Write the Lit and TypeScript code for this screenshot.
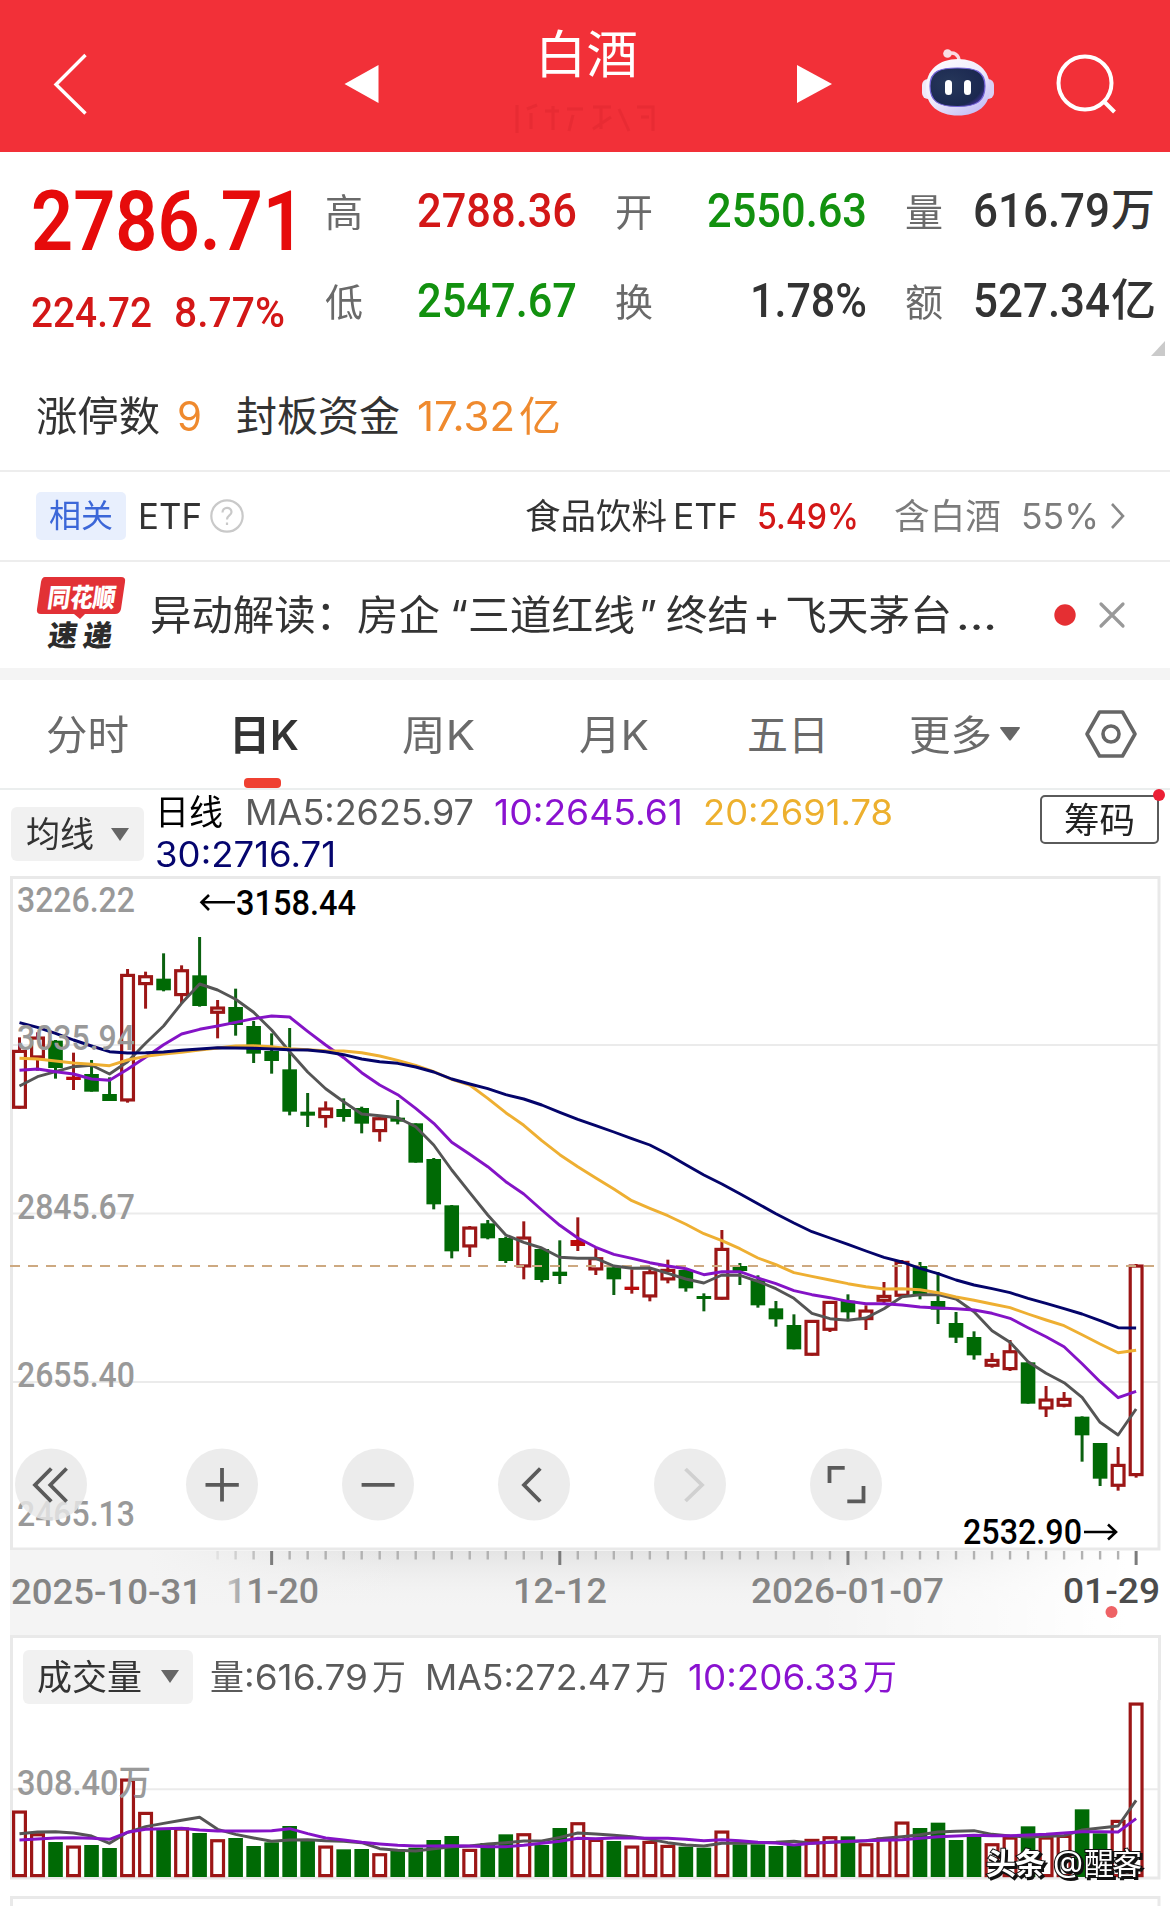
import { LitElement, html, svg, css } from "lit";
import { customElement, property } from "lit/decorators.js";

/** A run of text condensed or expanded horizontally to an exact width. */
@customElement("fit-text")
class FitText extends LitElement {
  @property({ type: Number }) w = 0;
  @property() text = "";
  static styles = css`
    :host { display: block; white-space: pre; flex: none; height: 1.2em; line-height: 1.2; }
    .run { display: inline-block; transform-origin: 0 50%; }
  `;
  render() {
    return html`<span class="run">${this.text}</span>`;
  }
  updated() {
    const run = this.renderRoot.querySelector(".run") as HTMLElement;
    this.style.width = `${this.w}px`;
    run.style.transform = "none";
    const natural = run.getBoundingClientRect().width;
    if (natural > 0) run.style.transform = `scaleX(${this.w / natural})`;
  }
}

const t = (text: string, w: number, cls = "") =>
  html`<fit-text class=${cls} .text=${text} .w=${w}></fit-text>`;

const FIRST = 19.5;
const STEP = 18.01;
const cx = (i: number) => FIRST + STEP * i;

type Candle = [string, number, number, number, number];
const scaleSet = (base: number, rows: Candle[]): Candle[] =>
  rows.map(([k, h, a, b, l]) => [k, base + h / 3, base + a / 3, base + b / 3, base + l / 3]);

const CANDLES: Candle[] = [
  ...scaleSet(870, [
    ["r", 502, 540, 716, 716], ["r", 487, 500, 565, 602], ["g", 510, 512, 594, 626], ["r", 548, 620, 630, 660],
    ["g", 570, 612, 665, 665], ["g", 622, 672, 693, 693], ["r", 297, 312, 694, 698], ["r", 305, 316, 345, 416],
    ["g", 250, 326, 361, 364], ["r", 286, 298, 378, 402], ["g", 201, 316, 408, 410], ["r", 390, 410, 431, 505],
    ["g", 356, 411, 465, 497], ["g", 453, 468, 551, 579], ["g", 490, 543, 573, 611], ["g", 474, 598, 725, 736],
    ["g", 669, 725, 737, 771], ["r", 694, 713, 744, 773], ["g", 685, 717, 741, 755], ["g", 710, 714, 761, 790],
    ["r", 742, 742, 786, 815],
  ]),
  ...scaleSet(1050, [
    ["g", 150, 203, 215, 223], ["g", 220, 220, 338, 338], ["g", 324, 327, 463, 478], ["g", 465, 466, 604, 625],
    ["r", 528, 530, 592, 621], ["g", 510, 520, 565, 568], ["g", 560, 564, 633, 639], ["r", 514, 560, 652, 688],
    ["g", 594, 597, 690, 697], ["g", 571, 665, 678, 702], ["r", 502, 570, 588, 603], ["r", 592, 622, 661, 675],
    ["g", 650, 652, 688, 735], ["r", 658, 710, 720, 731], ["r", 652, 664, 742, 754], ["r", 629, 657, 691, 700],
    ["g", 655, 660, 715, 725], ["g", 730, 738, 747, 784], ["r", 540, 594, 749, 749], ["g", 639, 648, 663, 705],
    ["g", 676, 690, 766, 773],
  ]),
  ...scaleSet(1200, [
    ["g", 303, 325, 358, 380], ["g", 343, 375, 448, 448], ["r", 360, 360, 467, 467], ["r", 303, 303, 392, 396],
    ["g", 283, 302, 337, 360], ["r", 316, 329, 360, 390], ["r", 246, 285, 305, 312], ["r", 180, 183, 290, 292],
    ["g", 186, 198, 284, 298], ["g", 216, 303, 329, 372], ["g", 336, 369, 413, 429], ["g", 394, 411, 466, 479],
    ["r", 459, 477, 500, 503], ["r", 420, 451, 510, 513], ["g", 486, 487, 611, 611], ["r", 558, 596, 628, 651],
    ["r", 576, 594, 620, 622], ["g", 649, 650, 706, 785], ["g", 729, 729, 836, 858], ["r", 741, 792, 860, 872],
    ["r", 192, 194, 828, 833],
  ]),
];

const series = (a: number[], b: number[], c: number[]) => [
  ...a.map((v) => 870 + v / 3), ...b.map((v) => 1050 + v / 3), ...c.map((v) => 1200 + v / 3),
];
const MA5 = series(
  [648, 620, 605, 590, 586, 612, 575, 520, 468, 400, 342, 360, 388, 427, 480, 545, 606, 656, 695, 732, 737],
  [203, 230, 285, 360, 428, 495, 555, 577, 594, 622, 625, 625, 648, 655, 654, 670, 687, 699, 675, 676, 694],
  [266, 295, 340, 356, 361, 354, 326, 290, 284, 284, 297, 335, 392, 427, 485, 520, 548, 592, 667, 705, 627]);
const MA10 = series(
  [601, 597, 605, 612, 627, 631, 598, 562, 524, 492, 478, 468, 457, 446, 438, 441, 484, 525, 563, 608, 645],
  [134, 175, 220, 277, 313, 350, 395, 432, 480, 526, 564, 592, 613, 625, 638, 648, 656, 674, 665, 665, 684],
  [251, 272, 284, 293, 304, 311, 311, 315, 321, 324, 326, 330, 340, 355, 383, 410, 440, 491, 545, 593, 574]);
const MA20 = series(
  [565, 567, 573, 579, 583, 587, 570, 559, 552, 547, 540, 534, 528, 527, 530, 536, 539, 542, 543, 548, 558],
  [31, 46, 65, 88, 105, 145, 188, 226, 272, 314, 350, 384, 417, 452, 475, 497, 523, 551, 572, 596, 624],
  [194, 218, 229, 240, 251, 260, 267, 266, 269, 278, 291, 301, 312, 323, 342, 360, 377, 404, 432, 458, 451]);
const MA30 = series(
  [458, 472, 490, 510, 528, 545, 549, 548, 546, 541, 537, 533, 534, 535, 537, 539, 540, 545, 554, 567, 575],
  [40, 51, 66, 87, 102, 116, 134, 147, 165, 187, 208, 227, 246, 266, 285, 313, 344, 375, 402, 431, 461],
  [41, 69, 95, 114, 133, 153, 172, 186, 205, 221, 240, 255, 266, 278, 295, 310, 326, 342, 362, 383, 384]);

const VOLUMES = [
  542, 610, 636, 647, 645, 654, 446, 546, 600, 593, 609, 628, 624, 648, 637, 588, 629, 647, 658, 657, 670, 660,
  653, 630, 618, 657, 639, 613, 610, 645, 594, 577, 627, 633, 647, 633, 645, 650, 653, 602, 643, 643, 648, 645,
  627, 619, 619, 640, 623, 575, 594, 578, 630, 620, 640, 620, 589, 620, 615, 538, 610, 570, 218,
];
const VOLUME_KIND = "rrgrggrrgrgrgggggrggrggggrggrggrrgrrrggrggggrrgrrrggggrrgrrggrr";
const VMA5 = [
  611, 606, 605, 609, 618, 640, 607, 590, 580, 571, 562, 598, 613, 624, 634, 630, 629, 632, 634, 638, 656, 661,
  663, 656, 650, 648, 642, 638, 633, 633, 622, 609, 612, 616, 620, 628, 638, 645, 648, 640, 640, 638, 637, 634,
  640, 637, 635, 632, 625, 620, 614, 606, 604, 602, 613, 618, 621, 619, 617, 600, 594, 588, 511,
];
const VMA10 = [
  630, 627, 624, 623, 625, 628, 607, 598, 596, 595, 600, 603, 603, 603, 602, 596, 611, 624, 630, 637, 642, 646,
  648, 648, 647, 648, 650, 650, 646, 640, 634, 625, 626, 624, 624, 625, 625, 628, 632, 629, 632, 637, 639, 645,
  640, 637, 634, 632, 631, 629, 625, 620, 618, 616, 617, 617, 615, 613, 609, 605, 605, 606, 566,
];

const line = (vals: number[], cls: string) =>
  svg`<polyline class="ma ${cls}" points=${vals.map((v, i) => `${cx(i)},${v.toFixed(1)}`).join(" ")}></polyline>`;

const label = (x: number, y: number, w: number, text: string, cls = "") =>
  svg`<text class="lab ${cls}" x=${x} y=${y} textLength=${w} lengthAdjust="spacingAndGlyphs">${text}</text>`;

const bar = (kind: string, x: number, top: number, bottom: number) => {
  const h = bottom - top;
  if (kind === "g") return svg`<rect class="down" x=${x - 7.3} y=${top} width="14.6" height=${h}></rect>`;
  if (h < 6.5) return svg`<rect class="up-solid" x=${x - 7.3} y=${top} width="14.6" height=${h}></rect>`;
  return svg`<rect class="up" x=${x - 5.9} y=${top + 1.4} width="11.8" height=${h - 2.8}></rect>`;
};

@customElement("price-chart")
class PriceChart extends LitElement {
  static styles = css`
    :host { display: block; height: 675px; }
    svg { display: block; overflow: visible; }
    .frame { fill: none; stroke: #e9e9e9; stroke-width: 3; }
    .grid { stroke: #ebebeb; stroke-width: 2; }
    .now { stroke: #cda981; stroke-width: 2; stroke-dasharray: 10 8; }
    .ma { fill: none; stroke-width: 2.9; stroke-linejoin: round; }
    .m5 { stroke: #555; } .m10 { stroke: #8413c6; } .m20 { stroke: #eeaf32; } .m30 { stroke: #04046a; }
    .down { fill: #006a05; } .wd { stroke: #0b6110; stroke-width: 3; }
    .up { fill: #fff; stroke: #9c1616; stroke-width: 3.2; } .up-solid { fill: #bc0a0a; }
    .wu { stroke: #9c1616; stroke-width: 3; }
    .lab { font: 500 35px Roboto, "Noto Sans CJK SC", sans-serif; fill: #999; }
    .ink { fill: #000; }
    .arrow { fill: none; stroke: #000; stroke-width: 2.6; }
    .disc { fill: #e8e8e8; fill-opacity: 0.82; }
    .ico { fill: none; stroke: #5a5a5a; stroke-width: 3.8; }
    .off { stroke: #d0d0d0; }
  `;
  render() {
    return html`<svg width="1170" height="675" viewBox="0 876 1170 675">
      <path class="grid" d="M12 1045H1158M12 1213.6H1158M12 1382H1158"></path>
      <rect class="frame" x="11.5" y="877.5" width="1147.5" height="671.5"></rect>
      ${CANDLES.map(([k, h, a, b, l], i) => svg`
        <line class=${k === "g" ? "wd" : "wu"} x1=${cx(i)} x2=${cx(i)} y1=${h} y2=${l}></line>
        ${bar(k, cx(i), a, b)}`)}
      <path class="now" d="M10 1266H1158"></path>
      ${line(MA5, "m5")}${line(MA10, "m10")}${line(MA20, "m20")}${line(MA30, "m30")}
      ${label(17, 912, 118, "3226.22")}${label(17, 1050, 118, "3035.94")}${label(17, 1218.5, 118, "2845.67")}
      ${label(17, 1387, 118, "2655.40")}${label(17, 1526, 118, "2465.13")}
      ${label(236, 915, 120, "3158.44", "ink")}${label(963, 1544, 119, "2532.90", "ink")}
      <path class="arrow" d="M235 902.3H202M209 895L201.500 902.3L209 910M1084 1532H1116M1108 1524.500L1116 1532L1108 1539.500"></path>
      ${[51, 222, 378, 534, 690, 846].map((x) => svg`<circle class="disc" cx=${x} cy="1484.5" r="36"></circle>`)}
      <path class="ico" d="M51.300 1468.500L35 1485L51.300 1501.500M66.600 1468.500L50.300 1485L66.600 1501.500M205.500 1484.800H238.800M222 1468V1501.500M361.600 1484.800H394.600M540.300 1468.500L524 1485L540.300 1501.500M829.500 1483V1467.800H844.700M847.300 1501.300H863.500V1486"></path>
      <path class="ico off" d="M685.500 1469L702 1485L685.500 1501"></path>
    </svg>`;
  }
}

@customElement("date-axis")
class DateAxis extends LitElement {
  static styles = css`
    :host { display: block; height: 84px; }
    svg { display: block; }
    .tick { stroke: #b2b2b2; stroke-width: 2.4; } .major { stroke: #7c7c7c; stroke-width: 3; }
    .lab { font: 500 35px Roboto, sans-serif; fill: #858585; }
    .today { fill: #4c4c4c; } .soft { fill: url(#txt); }
    .dot { fill: #ee6265; }
  `;
  render() {
    const ticks = Array.from({ length: 52 }, (_, k) => k + 11);
    return html`<svg width="1170" height="84" viewBox="0 1551 1170 84">
      <defs>
        <linearGradient id="v" x1="0" x2="0" y1="0" y2="1"><stop offset="0" stop-color="#e4e4e4"></stop><stop offset=".7" stop-color="#f4f4f4" stop-opacity="0"></stop></linearGradient>
        <linearGradient id="h"><stop offset=".12" stop-color="#f4f4f4"></stop><stop offset=".34" stop-color="#f4f4f4" stop-opacity="0"></stop><stop offset=".7" stop-color="#fff" stop-opacity="0"></stop><stop offset=".97" stop-color="#fff"></stop></linearGradient>
        <linearGradient id="txt"><stop offset="0" stop-color="#ccc"></stop><stop offset=".3" stop-color="#858585"></stop></linearGradient>
      </defs>
      <rect x="10" y="1551" width="1150" height="84" fill="#f4f4f4"></rect>
      <rect x="10" y="1551" width="1150" height="84" fill="url(#v)"></rect>
      <rect x="10" y="1551" width="1150" height="84" fill="url(#h)"></rect>
      ${ticks.map((i) => {
        const major = i === 14 || i === 30 || i === 46 || i === 62;
        return svg`<line class="tick ${major ? "major" : ""}" opacity=${i < 14 ? 0.25 * (i - 10) : 1} x1=${cx(i)} x2=${cx(i)} y1="1551" y2=${major ? 1565 : 1559.5}></line>`;
      })}
      ${label(11, 1603.5, 191, "2025-10-31")}${label(226, 1603, 93, "11-20", "soft")}${label(513, 1603, 94, "12-12")}
      ${label(751, 1603, 193, "2026-01-07")}${label(1063, 1603, 97, "01-29", "today")}
      <circle class="dot" cx="1111.5" cy="1612" r="6"></circle>
    </svg>`;
  }
}

@customElement("volume-chart")
class VolumeChart extends LitElement {
  static styles = css`
    :host { display: block; height: 206px; }
    svg { display: block; overflow: visible; }
    .grid { stroke: #ebebeb; stroke-width: 2; } .frame { fill: none; stroke: #e9e9e9; stroke-width: 3; }
    .ma { fill: none; stroke-width: 2.9; stroke-linejoin: round; }
    .m5 { stroke: #555; } .m10 { stroke: #8413c6; }
    .down { fill: #006a05; } .up { fill: #fff; stroke: #9c1616; stroke-width: 3.2; }
    .lab { font: 500 35px Roboto, "Noto Sans CJK SC", sans-serif; fill: #999; }
    .mark { font: 30px Inter, "Noto Sans CJK SC", sans-serif; fill: #fff; stroke: #111; stroke-width: 2px; paint-order: stroke; filter: drop-shadow(2px 2px 0 #111); }
    .heavy { font-weight: 700; }
  `;
  render() {
    return html`<svg width="1170" height="206" viewBox="0 1700 1170 206">
      <path class="grid" d="M12 1789.300H1158"></path>
      <path class="frame" d="M11.500 1700V1878H1159V1700M11.500 1906V1897.500H1159V1906"></path>
      ${VOLUMES.map((v, i) => bar(VOLUME_KIND[i], cx(i), 1630 + v / 3, 1877))}
      ${line(VMA5.map((v) => 1630 + v / 3), "m5")}${line(VMA10.map((v) => 1630 + v / 3), "m10")}
      ${label(17, 1795, 134, "308.40万")}
      <text class="mark heavy" x="986" y="1874" textLength="59">头条</text>
      <text class="mark" x="1053" y="1872" textLength="30" lengthAdjust="spacingAndGlyphs">@</text>
      <text class="mark" x="1084" y="1874" textLength="58">醒客</text>
    </svg>`;
  }
}

@customElement("app-root")
class AppRoot extends LitElement {
  static styles = css`
    :host { display: block; width: 1170px; height: 1906px; overflow: hidden; background: #fff; color: #333;
      font-family: Inter, "Noto Sans CJK SC", sans-serif; }
    * { box-sizing: border-box; }
    svg { display: block; flex: none; overflow: visible; }
    .row { display: flex; align-items: center; }
    .header { height: 152px; background: #f23038; display: grid; grid-template-columns: 344px 488px 338px; align-items: center; color: #fff; }
    .back { margin: 16px 0 0 53px; }
    .nav { display: grid; grid-template-columns: 34px 1fr 36px; }
    .nav .arrow { margin-top: 65px; }
    .title { display: flex; flex-direction: column; align-items: center; height: 152px; padding: 24px 0 0; margin-left: -1px; font-size: 51px; }
    .ghost { margin: 18px 0 0 -4px; }
    .tools { margin: 14px 0 0 87px; display: flex; gap: 60px; align-items: center; }
    .quote { position: relative; height: 208px; display: flex; padding-top: 14px; }
    .din { font-family: Roboto, "Noto Sans CJK SC", sans-serif; font-weight: 500; }
    .price { width: 326px; padding-left: 31px; color: #e60b0b; }
    .big { font-size: 83px; font-weight: 600; margin-top: 6px; }
    .delta { display: flex; gap: 22px; font-size: 42.500px; margin-top: 15px; color: #d31717; }
    .stats { display: grid; grid-template-columns: 91px 160px 39px 91px 160px 39px 67px 184px; grid-template-rows: 90px 90px; align-items: center; font-size: 48px; }
    .key { font-size: 38px; color: #6a6a6a; padding-top: 3px; font-weight: 400; margin-left: -1px; }
    .red { color: #d31717; } .green { color: #12910f; }
    .end { justify-self: end; }
    .corner { position: absolute; right: 5px; bottom: 4px; }
    .mix { display: flex; align-items: center; gap: 1px; }
    .wan { font-size: 44px; }
    .limit { height: 112px; border-bottom: 2px solid #ededed; padding: 4px 0 0 36px; font-size: 41px; }
    .orange { color: #ef8a2e; }
    .etf { height: 90px; border-bottom: 2px solid #ededed; padding-left: 36px; font-size: 35px; }
    .tag { width: 90px; height: 48px; border-radius: 5px; background: #e8effd; color: #3c67d8; font-size: 32px; display: flex; align-items: center; justify-content: center; }
    .soft { color: #7c7c7c; } .med { font-weight: 500; }
    .news { height: 106px; padding: 2px 0 0 35px; font-size: 41px; }
    .logo { font-family: Roboto, "Noto Sans CJK SC", sans-serif; font-weight: 900; }
    .badge { margin-top: -7px; }
    .band { height: 12px; background: #f4f4f4; }
    .tabs { height: 110px; border-bottom: 2px solid #ebeeee; padding-left: 46px; font-size: 41px; color: #6a6a6a; position: relative; }
    .tabs fit-text { padding-top: 2px; }
    .on { color: #333; font-weight: 600; }
    .bar { position: absolute; left: 244px; top: 98px; width: 37px; height: 10px; border-radius: 4px; background: #ef4031; }
    .legend { height: 86px; display: flex; align-items: flex-start; padding: 1px 0 0 11px; font-size: 35px; }
    .pick { height: 54px; background: #f1f1f1; border-radius: 6px; display: flex; align-items: center; justify-content: center; gap: 17px; font-size: 35px; }
    .pick.a { width: 133px; margin-top: 16px; }
    .pick.b { width: 170px; margin-left: 10px; gap: 19px; }
    .values { width: 896px; padding: 0 0 0 11px; }
    .values .row { height: 42px; }
    .black { color: #000; } .c5 { color: #5a5a5a; } .c10 { color: #8a12d0; } .c20 { color: #edb02e; } .c30 { color: #05056e; }
    .chip { position: relative; width: 119px; height: 49px; margin-top: 4px; border: 2px solid #5a5a5a; border-radius: 5px; display: flex; align-items: center; justify-content: center; color: #222; }
    .dot { position: absolute; right: -8px; top: -8px; width: 12px; height: 12px; border-radius: 50%; background: #ec1f35; }
    .g4 { margin-left: 4px; } .g5 { margin-left: 5px; } .g6 { margin-left: 6px; } .g8 { margin-left: 8px; } .g9 { margin-left: 9px; } .g10 { margin-left: 10px; }
    .g12 { margin-left: 12px; } .g17 { margin-left: 17px; } .g19 { margin-left: 19px; } .g20 { margin-left: 20px; } .g22 { margin-left: 22px; } .g23 { margin-left: 23px; }
    .g34 { margin-left: 34px; } .g35 { margin-left: 35px; } .g64 { margin-left: 64px; } .g100 { margin-left: 100px; } .g103 { margin-left: 103px; } .g104 { margin-left: 104px; }
    .g98 { margin-left: 98px; } .g80 { margin-left: 80px; } .g281 { margin-left: 281px; } .close { margin-left: 57px; }
    .vol { height: 65px; font-size: 35px; margin: 0 10px; border: solid #e9e9e9; border-width: 3px 3px 0; width: 1150.500px; padding-top: 15px; }
  `;
  render() {
    return html`
      <div class="header">
        <svg class="back" width="36" height="64" viewBox="0 0 36 64" fill="none" stroke="#fff" stroke-width="3.4"><path d="M32.500 3L3 32.500L32.500 61.500"></path></svg>
        <div class="nav">
          <svg class="arrow" width="34" height="38" viewBox="0 0 34 38"><path d="M34.500 0V38L.5 19Z" fill="#fff"></path></svg>
          <div class="title">${t("白酒", 103)}
            <svg class="ghost" width="144" height="32" viewBox="0 0 144 32" fill="none" stroke="#e42a32" stroke-width="3" opacity=".7"><path d="M4 2V30M14 6L24 2M18 10V26M32 8H46M40 3V27M54 6H70M60 12L56 28M80 4H98M88 4V26M80 26L98 14M106 6L116 28M124 4H140V28M128 14H136"></path></svg>
          </div>
          <svg class="arrow" width="36" height="38" viewBox="0 0 36 38"><path d="M1 0V38L36 19Z" fill="#fff"></path></svg>
        </div>
        <div class="tools">
          <svg width="78" height="72" viewBox="0 0 78 72">
            <defs>
              <linearGradient id="shell" x1="0" y1="0" x2=".7" y2="1"><stop offset="0" stop-color="#fff"></stop><stop offset=".55" stop-color="#f0ebfb"></stop><stop offset="1" stop-color="#c6c0f6"></stop></linearGradient>
              <radialGradient id="face" cx=".35" cy=".4" r=".75"><stop offset="0" stop-color="#26375a"></stop><stop offset=".8" stop-color="#1b2850"></stop><stop offset="1" stop-color="#4a35a8"></stop></radialGradient>
            </defs>
            <rect x="3" y="32" width="14" height="20" rx="6" fill="#efe9f8"></rect><rect x="60" y="32" width="15" height="20" rx="6" fill="#d9cff4"></rect>
            <path d="M28 7C35 4 40 8 40 14" fill="none" stroke="#fbd9e2" stroke-width="3.500"></path><circle cx="28.500" cy="6.500" r="4.300" fill="#f9dfe6"></circle>
            <path d="M39 12C58 12 71 23 71 41C71 58 59 68.500 39 68.500C19 68.500 7 58 7 41C7 23 20 12 39 12Z" fill="url(#shell)"></path>
            <path d="M38.500 21C56 21 66 24 66 39C66 54 58 59.500 38.500 59.500C19 59.500 11 54 11 39C11 24 21 21 38.500 21Z" fill="url(#face)" stroke="#7464d8" stroke-width="1.200"></path>
            <rect x="26" y="33" width="7" height="15" rx="3.500" fill="#fff"></rect><rect x="45" y="33" width="7" height="15" rx="3.500" fill="#fff"></rect>
          </svg>
          <svg width="62" height="62" viewBox="0 0 62 62" fill="none" stroke="#fff" stroke-width="4"><circle cx="28" cy="31" r="26.500"></circle><path d="M47.500 50L57.500 60"></path></svg>
        </div>
      </div>

      <div class="quote din">
        <div class="price">
          ${t("2786.71", 274, "big")}
          <div class="delta">${t("224.72", 121)}${t("8.77%", 111)}</div>
        </div>
        <div class="stats">
          ${t("高", 38, "key")}${t("2788.36", 160, "red")}<i></i>${t("开", 38, "key")}${t("2550.63", 160, "green")}<i></i>${t("量", 38, "key")}
          <div class="mix">${t("616.79", 137)}${t("万", 44, "wan")}</div>
          ${t("低", 38, "key")}${t("2547.67", 160, "green")}<i></i>${t("换", 38, "key")}${t("1.78%", 117, "end")}<i></i>${t("额", 38, "key")}
          <div class="mix">${t("527.34", 137)}${t("亿", 45, "wan")}</div>
        </div>
        <svg class="corner" width="14" height="15" viewBox="0 0 14 15"><path d="M14 0V15H0Z" fill="#cacaca"></path></svg>
      </div>

      <div class="row limit">
        ${t("涨停数", 124)}${t("9", 25, "orange g17")}${t("封板资金", 164, "g34")}${t("17.32", 98, "orange g17")}${t("亿", 42, "orange g4")}
      </div>

      <div class="row etf">
        <div class="tag">${t("相关", 64)}</div>
        ${t("ETF", 64, "g12")}
        <svg class="g8" width="34" height="34" viewBox="0 0 34 34" fill="none" stroke="#c9c9c9" stroke-width="2.200"><circle cx="17" cy="17" r="15.700"></circle><path d="M12.500 13.500C12.500 7.500 21.500 7.500 21.500 13C21.500 16.500 17 16.500 17 20.500M17 23.500V26"></path></svg>
        ${t("食品饮料", 142, "g281")}${t("ETF", 65, "g6")}${t("5.49%", 102, "red med g19")}${t("含白酒", 107, "soft g35")}${t("55%", 78, "soft g20")}
        <svg class="g10" width="18" height="30" viewBox="0 0 18 30" fill="none" stroke="#888" stroke-width="2.600"><path d="M3 3L14 15L3 27"></path></svg>
      </div>

      <div class="row news">
        <svg class="badge" width="92" height="76" viewBox="0 0 92 76">
          <path d="M10 2H86Q91 2 90 7L86 34Q85 39 80 39H50L45 44L39 39H6Q1 39 2 34L6 7Q7 2 10 2Z" fill="#e23136"></path>
          <g class="logo" transform="skewX(-8)"><text x="16" y="32" font-size="26" textLength="68" lengthAdjust="spacingAndGlyphs" fill="#fff">同花顺</text>
          <text x="22" y="71" font-size="29" textLength="64" fill="#2c2c2c">速递</text></g>
        </svg>
        ${t("异动解读：", 207, "g23")}${t("房企", 83, "g1")}${t("“", 18, "g10")}${t("三道红线", 167)}${t("”", 18, "g4")}${t("终结", 83, "g9")}${t("+", 27, "g4")}${t("飞天茅台", 167, "g5")}${t("...", 41, "g4")}
        <svg class="close" width="72" height="30" viewBox="0 0 72 30"><circle cx="11" cy="14" r="10.700" fill="#e52f33"></circle><path d="M47 3L69 25M69 3L47 25" stroke="#999" stroke-width="3.200" stroke-linecap="round"></path></svg>
      </div>
      <div class="band"></div>

      <div class="row tabs">
        ${t("分时", 83)}${t("日K", 70, "on g100")}${t("周K", 73, "g103")}${t("月K", 70, "g104")}${t("五日", 82, "g98")}${t("更多", 83, "g80")}
        <svg class="g8" width="20" height="14" viewBox="0 0 20 14"><path d="M0 1Q0 0 1 0H19Q20 0 20 1L11 13Q10 14 9 13Z" fill="#666"></path></svg>
        <svg class="g64" width="54" height="50" viewBox="0 0 54 50" fill="none" stroke="#666" stroke-width="3.600" stroke-linejoin="round"><path d="M15.500 3H38.500L51 25L38.500 47H15.500L3 25Z"></path><circle cx="27" cy="25" r="8"></circle></svg>
        <div class="bar"></div>
      </div>

      <div class="legend">
        <div class="pick a">${t("均线", 68)}<svg width="18" height="13" viewBox="0 0 18 13"><path d="M0 0H18L9 13Z" fill="#666"></path></svg></div>
        <div class="values">
          <div class="row">${t("日线", 68, "black")}${t("MA5:2625.97", 229, "c5 g22")}${t("10:2645.61", 189, "c10 g20")}${t("20:2691.78", 190, "c20 g20")}</div>
          <div class="row">${t("30:2716.71", 181, "c30")}</div>
        </div>
        <div class="chip">${t("筹码", 71)}<span class="dot"></span></div>
      </div>

      <price-chart></price-chart>
      <date-axis></date-axis>
      <div class="row vol">
        <div class="pick b">${t("成交量", 105)}<svg width="18" height="13" viewBox="0 0 18 13"><path d="M0 0H18L9 13Z" fill="#666"></path></svg></div>
        ${t("量", 34, "c5 g17")}${t(":616.79", 124, "c5")}${t("万", 34, "c5 g4")}${t("MA5:272.47", 206, "c5 g19")}${t("万", 34, "c5 g4")}${t("10:206.33", 171, "c10 g19")}${t("万", 34, "c10 g4")}
      </div>
      <volume-chart></volume-chart>
    `;
  }
}
